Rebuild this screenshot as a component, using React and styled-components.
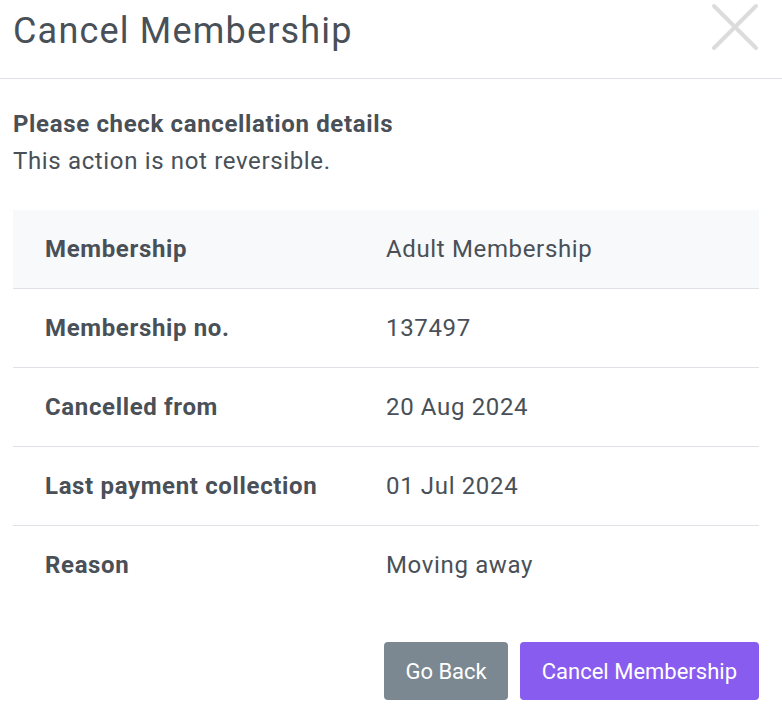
import React from 'react';
import styled, { createGlobalStyle } from 'styled-components';

const GlobalStyle = createGlobalStyle`
  body {
    margin: 0;
    background: #fff;
    font-family: Roboto, "Liberation Sans", Arial, sans-serif;
    color: #495057;
  }
`;

const details = [
  ['Membership', 'Adult Membership'],
  ['Membership no.', '137497'],
  ['Cancelled from', '20 Aug 2024'],
  ['Last payment collection', '01 Jul 2024'],
  ['Reason', 'Moving away'],
];

const CloseIcon = () => (
  <svg width="48" height="48" viewBox="0 0 48 48" fill="none">
    <path d="M3 3 L45 45 M45 3 L3 45" stroke="#dcdcdc" strokeWidth="4" strokeLinecap="round" />
  </svg>
);

const App = () => {
  return (
    <>
      <GlobalStyle />
      <Modal>
        <Header>
          <Title>Cancel Membership</Title>
          <CloseButton aria-label="Close">
            <CloseIcon />
          </CloseButton>
        </Header>
        <Body>
          <Lead>Please check cancellation details</Lead>
          <Note>This action is not reversible.</Note>
          <Table>
            {details.map(([label, value], i) => (
              <Row key={label} $shaded={i === 0} $last={i === details.length - 1}>
                <Label>{label}</Label>
                <Value>{value}</Value>
              </Row>
            ))}
          </Table>
          <Actions>
            <Button $variant="secondary">Go Back</Button>
            <Button $variant="primary">Cancel Membership</Button>
          </Actions>
        </Body>
      </Modal>
    </>
  );
};

export default App;

const Modal = styled.div`
  width: 782px;
  min-height: 724px;
  background: #fff;
`;

const Header = styled.div`
  display: flex;
  justify-content: space-between;
  align-items: flex-start;
  height: 78px;
  padding: 0 23px 0 13px;
  border-bottom: 1px solid #dee2e6;
  box-sizing: content-box;
`;

const Title = styled.h1`
  margin: 10px 0 0;
  font-size: 36px;
  line-height: 43px;
  font-weight: 400;
  letter-spacing: 0.033em;
  color: #495057;
`;

const CloseButton = styled.button`
  display: flex;
  margin-top: 3px;
  padding: 0;
  border: 0;
  background: none;
  cursor: pointer;
`;

const Body = styled.div`
  padding: 27px 23px 0 13px;
`;

const Lead = styled.div`
  font-size: 24px;
  line-height: 37px;
  font-weight: 700;
  letter-spacing: 0.027em;
`;

const Note = styled.div`
  font-size: 24px;
  line-height: 37px;
  letter-spacing: 0.027em;
`;

const Table = styled.div`
  margin-top: 30px;
`;

const Row = styled.div`
  display: grid;
  grid-template-columns: 341px 1fr;
  align-items: center;
  height: 78px;
  padding: 0 32px;
  background: ${p => (p.$shaded ? '#f8f9fa' : '#fff')};
  border-bottom: 1px solid ${p => (p.$last ? 'transparent' : '#dee2e6')};
  font-size: 24px;
  letter-spacing: 0.027em;
`;

const Label = styled.div`
  font-weight: 700;
`;

const Value = styled.div`
  font-weight: 400;
`;

const Actions = styled.div`
  display: flex;
  justify-content: flex-end;
  gap: 12px;
  margin-top: 37px;
`;

const Button = styled.button`
  height: 58px;
  padding: 0 ${p => (p.$variant === 'primary' ? '22px' : '21px')};
  border: 0;
  border-radius: 4px;
  font-family: Roboto, "Liberation Sans", Arial, sans-serif;
  font-size: 22px;
  color: #fff;
  background: ${p => (p.$variant === 'primary' ? '#885cee' : '#7b8891')};
  cursor: pointer;
`;
